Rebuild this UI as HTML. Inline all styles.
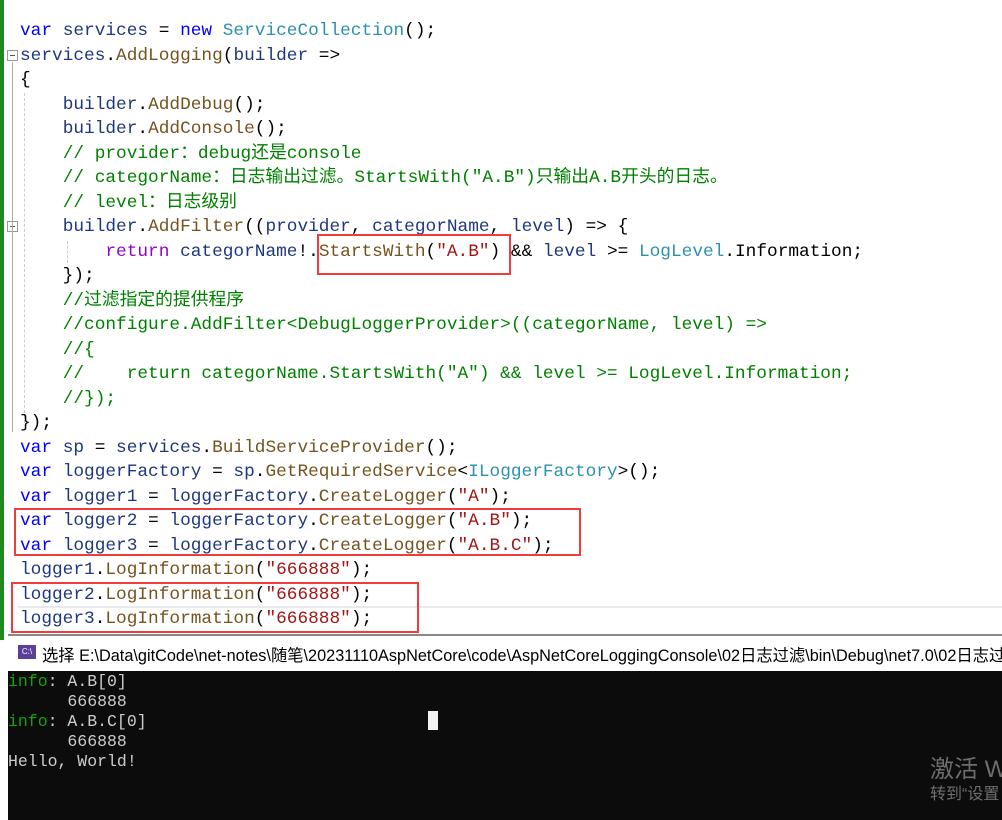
<!DOCTYPE html>
<html><head><meta charset="utf-8"><style>
*{margin:0;padding:0;box-sizing:border-box}
body{width:1002px;height:820px;background:#fff;position:relative;overflow:hidden;font-family:"Liberation Mono","Noto Sans CJK SC",monospace}
.code{position:absolute;left:20px;top:19px;font-size:17.8px;line-height:24.5px;color:#000;white-space:pre}
.k{color:#0000ff}.t{color:#2b91af}.m{color:#74531f}.v{color:#1f377f}.s{color:#a31515}.c{color:#008000}.r{color:#8f08c4}
.bar{position:absolute;left:0;top:0;width:4px;height:640px;background:#1e8a1e}
.box{position:absolute;border:2px solid #f03c3c}
.fold{position:absolute;left:7px;width:11px;height:11px;border:1px solid #999;background:#fff}
.fold:after{content:"";position:absolute;left:2px;top:4px;width:5px;height:1px;background:#555}
.vl{position:absolute;border-left:1px solid #aaa}
.dl{position:absolute;border-left:1px dashed #ccc}
.title{position:absolute;left:8px;top:634px;width:994px;height:37px;background:#fff;border-top:2px solid #888;font-family:"Liberation Sans","Noto Sans CJK SC",sans-serif;font-size:16.3px;color:#000}
.con{position:absolute;left:8px;top:671px;width:994px;height:149px;background:#0c0c0c;font-size:16.5px;line-height:20px;color:#cccccc;white-space:pre;font-family:"Liberation Mono","Noto Serif CJK SC",monospace}
</style></head><body>
<div class="bar"></div>
<div class="fold" style="top:50px"></div>
<div class="fold" style="top:221px"></div>
<div class="vl" style="left:12px;top:62px;height:370px"></div>
<div class="dl" style="left:24px;top:93px;height:330px"></div>
<div class="dl" style="left:67px;top:241px;height:22px"></div>
<div style="position:absolute;left:18px;top:606px;width:984px;height:2px;background:#e8e8ee"></div>
<div class="code"><span class="k">var</span> <span class="v">services</span> = <span class="k">new</span> <span class="t">ServiceCollection</span>();
<span class="v">services</span>.<span class="m">AddLogging</span>(<span class="v">builder</span> =&gt;
{
    <span class="v">builder</span>.<span class="m">AddDebug</span>();
    <span class="v">builder</span>.<span class="m">AddConsole</span>();
    <span class="c">// provider：debug还是console</span>
    <span class="c">// categorName：日志输出过滤。StartsWith("A.B")只输出A.B开头的日志。</span>
    <span class="c">// level：日志级别</span>
    <span class="v">builder</span>.<span class="m">AddFilter</span>((<span class="v">provider</span>, <span class="v">categorName</span>, <span class="v">level</span>) =&gt; {
        <span class="r">return</span> <span class="v">categorName</span>!.<span class="m">StartsWith</span>(<span class="s">"A.B"</span>) &amp;&amp; <span class="v">level</span> &gt;= <span class="t">LogLevel</span>.Information;
    });
    <span class="c">//过滤指定的提供程序</span>
    <span class="c">//configure.AddFilter&lt;DebugLoggerProvider&gt;((categorName, level) =&gt;</span>
    <span class="c">//{</span>
    <span class="c">//    return categorName.StartsWith("A") &amp;&amp; level &gt;= LogLevel.Information;</span>
    <span class="c">//});</span>
});
<span class="k">var</span> <span class="v">sp</span> = <span class="v">services</span>.<span class="m">BuildServiceProvider</span>();
<span class="k">var</span> <span class="v">loggerFactory</span> = <span class="v">sp</span>.<span class="m">GetRequiredService</span>&lt;<span class="t">ILoggerFactory</span>&gt;();
<span class="k">var</span> <span class="v">logger1</span> = <span class="v">loggerFactory</span>.<span class="m">CreateLogger</span>(<span class="s">"A"</span>);
<span class="k">var</span> <span class="v">logger2</span> = <span class="v">loggerFactory</span>.<span class="m">CreateLogger</span>(<span class="s">"A.B"</span>);
<span class="k">var</span> <span class="v">logger3</span> = <span class="v">loggerFactory</span>.<span class="m">CreateLogger</span>(<span class="s">"A.B.C"</span>);
<span class="v">logger1</span>.<span class="m">LogInformation</span>(<span class="s">"666888"</span>);
<span class="v">logger2</span>.<span class="m">LogInformation</span>(<span class="s">"666888"</span>);
<span class="v">logger3</span>.<span class="m">LogInformation</span>(<span class="s">"666888"</span>);</div>
<div class="box" style="left:317px;top:234px;width:194px;height:41px"></div>
<div class="box" style="left:14px;top:508px;width:567px;height:48px"></div>
<div class="box" style="left:11px;top:582px;width:408px;height:51px"></div>
<div class="title">
<div style="position:absolute;left:10px;top:9px;width:18px;height:14px;background:#5b3f9a;color:#fff;font-size:8px;line-height:14px;text-align:center">C:\</div>
<div style="position:absolute;left:34px;top:6px;white-space:nowrap">选择 E:\Data\gitCode\net-notes\随笔\20231110AspNetCore\code\AspNetCoreLoggingConsole\02日志过滤\bin\Debug\net7.0\02日志过滤.exe</div>
</div>
<div class="con" style="padding-top:1px"><span style="color:#13a10e">info</span>: A.B[0]
      666888
<span style="color:#13a10e">info</span>: A.B.C[0]
      666888
Hello, World!</div>
<div style="position:absolute;left:428px;top:711px;width:10px;height:19px;background:#f2f2f2"></div>
<div style="position:absolute;left:930px;top:749px;color:#6e6e6e;font-family:'Liberation Sans','Noto Sans CJK SC',sans-serif;font-size:24px;white-space:nowrap">激活 W</div>
<div style="position:absolute;left:930px;top:780px;color:#6e6e6e;font-family:'Liberation Sans','Noto Sans CJK SC',sans-serif;font-size:16px;white-space:nowrap">转到“设置</div>
</body></html>
